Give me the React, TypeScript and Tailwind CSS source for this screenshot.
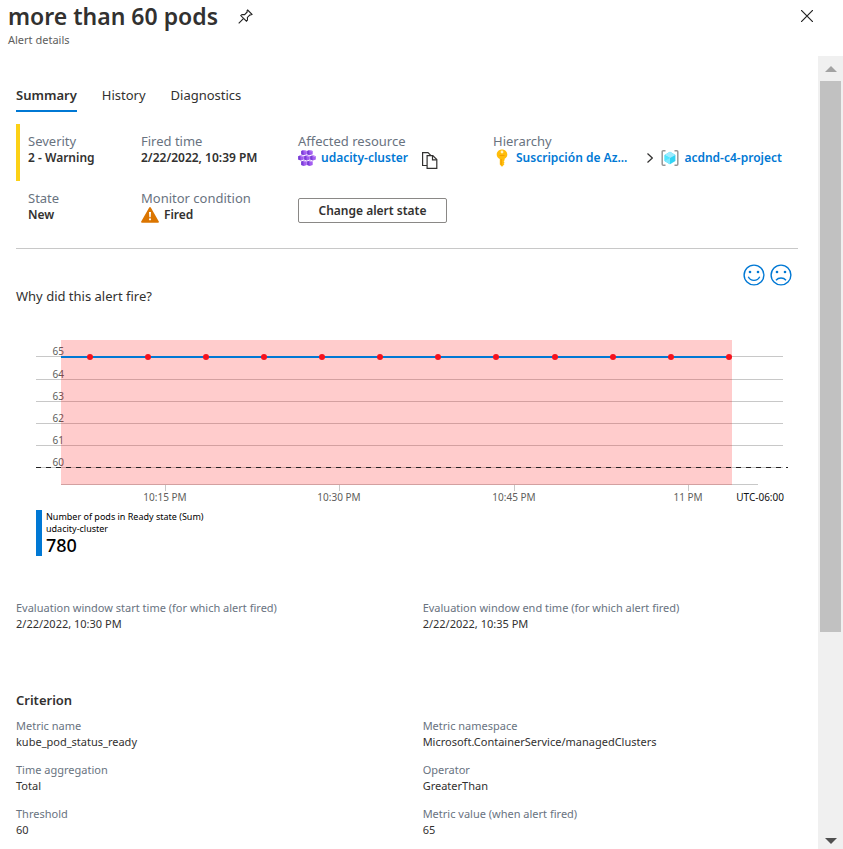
import type { ReactNode } from "react";

const tabs = ["Summary", "History", "Diagnostics"];

const gridLines = [
  { label: "65", y: 17 },
  { label: "64", y: 40 },
  { label: "63", y: 62 },
  { label: "62", y: 84 },
  { label: "61", y: 106 },
  { label: "60", y: 128 },
];

const timeTicks = [
  { label: "10:15 PM", x: 149 },
  { label: "10:30 PM", x: 323 },
  { label: "10:45 PM", x: 498 },
  { label: "11 PM", x: 672 },
];

const points = [74, 132, 190, 248, 306, 364, 422, 480, 539, 597, 655, 713];

const criteria = [
  ["Metric name", "kube_pod_status_ready"],
  ["Metric namespace", "Microsoft.ContainerService/managedClusters"],
  ["Time aggregation", "Total"],
  ["Operator", "GreaterThan"],
  ["Threshold", "60"],
  ["Metric value (when alert fired)", "65"],
];

function PinIcon() {
  return (
    <svg viewBox="0 0 15 15" className="size-[15px]" fill="none" stroke="#222" strokeWidth="1.1" aria-hidden="true">
      <path d="M9.6 1 14 5.4l-1.2.6-.8-.2-2.6 2.6.1 2.6-1.1 1.2-5.6-5.6L4 5.5l2.6.1L9.2 3 9 1.9z" />
      <path d="M5.4 9.6.7 14.3" />
    </svg>
  );
}

function CloseIcon() {
  return (
    <svg viewBox="0 0 12 12" className="size-3" stroke="#222" strokeWidth="1.2" aria-hidden="true">
      <path d="M0 0 12 12M12 0 0 12" />
    </svg>
  );
}

function WarningIcon() {
  return (
    <svg viewBox="0 0 18 16" className="h-4 w-[18px]" aria-hidden="true">
      <path d="M8.2.6a.9.9 0 0 1 1.6 0l8 13.800a.9.9 0 0 1-.8 1.400H1a.9.9 0 0 1-.8-1.400z" fill="#db7500" />
      <path d="M8 5h2l-.3 5.300H8.300z" fill="#fff" />
      <circle cx="9" cy="12.300" r="1.100" fill="#fff" />
    </svg>
  );
}

function ClusterIcon() {
  const cells = [
    [3.2, 0], [9.1, 0],
    [0.2, 5.3], [6.2, 5.3], [12.2, 5.3],
    [3.2, 10.6], [9.1, 10.6],
  ];
  return (
    <svg viewBox="0 0 18 16" className="h-4 w-[18px]" aria-hidden="true">
      {cells.map(([x, y]) => (
        <g key={`${x}-${y}`} transform={`translate(${x} ${y})`}>
          <path d="M2.800 0 5.600 1v3.300L2.800 5.300 0 4.300V1z" fill="#a35df0" />
          <path d="M0 1 2 .3l.5 4.900L0 4.300z" fill="#7a3fd6" />
          <path d="M2 .3 2.800 0 5.600 1 4 1.600z" fill="#c79bf8" />
        </g>
      ))}
    </svg>
  );
}

function CopyIcon() {
  return (
    <svg viewBox="0 0 16 17" className="h-[17px] w-4" fill="none" stroke="#323130" strokeWidth="1.2" aria-hidden="true">
      <path d="M5 13.500H.6V.6H6L9 3.600" />
      <path d="M5.100 3.600h5.700l4 4v8.800H5.100z" />
      <path d="M10.500 3.800v4.100h4.200" />
    </svg>
  );
}

function KeyIcon() {
  return (
    <svg viewBox="0 0 12 18" className="h-[18px] w-3" aria-hidden="true">
      <path
        d="M6 .4c3 0 5.300 2.200 5.300 5 0 2-1.100 3.500-2.700 4.300v1.500l-1 1 1 1-1 1 .9.900-1.900 2.200c-.3.300-.9.300-1.200 0L3.800 15.600V9.900C2 9.100.7 7.500.7 5.400.7 2.600 3 .4 6 .4z"
        fill="#ffbd0a"
      />
      <circle cx="6" cy="3" r="1.400" fill="#fff3c0" />
      <path d="M4.700 10v5.300l.9.900V10zM3.500 6.200h5v.8h-5z" fill="#ef9400" />
    </svg>
  );
}

function ResourceGroupIcon() {
  return (
    <svg viewBox="0 0 18 16" className="h-4 w-[18px]" aria-hidden="true">
      <path d="M4.500.8H2.200c-.6 0-1 .4-1 1v12.400c0 .6.4 1 1 1h2.300M13.500.8h2.300c.6 0 1 .4 1 1v12.400c0 .6-.4 1-1 1h-2.300" fill="none" stroke="#979797" strokeWidth="1.5" />
      <path d="M9 1.800l5.400 3.100v6.200L9 14.200l-5.400-3.100V4.900z" fill="#32d4f5" />
      <path d="M9 1.800l5.400 3.100L9 8 3.600 4.900z" fill="#9cebff" />
      <path d="M3.600 4.900 9 8v6.200l-5.400-3.100z" fill="#50e6ff" />
      <path d="M9 8 3.600 11.100 9 14.200z" fill="#9cebff" opacity=".6" />
    </svg>
  );
}

function FaceIcon({ happy }: { happy: boolean }) {
  return (
    <svg viewBox="0 0 22 22" className="size-[22px]" fill="none" stroke="#0078d4" strokeWidth="1.4" aria-hidden="true">
      <circle cx="11" cy="11" r="9.900" />
      <circle cx="7" cy="8" r="1.300" fill="#0078d4" stroke="none" />
      <circle cx="15" cy="8" r="1.300" fill="#0078d4" stroke="none" />
      {happy ? <path d="M5.300 12.700c1.200 2.500 3.300 3.700 5.700 3.700s4.500-1.200 5.700-3.700" /> : <path d="M6 16.200c1.300-1.500 3-2.200 5-2.200s3.700.7 5 2.200" />}
    </svg>
  );
}

function Field({ label, children }: { label: string; children: ReactNode }) {
  return (
    <div className="h-[57px]">
      <dt className="text-[13px] leading-[17px] text-[#69737f]">{label}</dt>
      <dd className="flex h-4 items-center text-[12px] leading-4 font-semibold whitespace-nowrap text-[#323130]">{children}</dd>
    </div>
  );
}

function Detail({ label, value }: { label: string; value: string }) {
  return (
    <div>
      <dt className="text-[11px] leading-4 text-[#69737f]">{label}</dt>
      <dd className="text-[11px] leading-4 text-[#323130]">{value}</dd>
    </div>
  );
}

function AlertChart() {
  return (
    <svg viewBox="0 0 782 170" className="block h-auto w-full" role="img" aria-label="Number of pods in Ready state">
      <g stroke="#c8c8c8">
        {gridLines.map((line) => (
          <path key={line.label} d={`M20 ${line.y - 0.5}H767`} />
        ))}
        <path d="M45 144.500H742" />
        {timeTicks.map((tick) => (
          <path key={tick.label} d={`M${tick.x + 0.5} 145v6`} />
        ))}
      </g>
      <g className="text-[10px]" fill="#605e5c">
        {gridLines.map((line) => (
          <text key={line.label} x="48" y={line.y - 2} textAnchor="end">{line.label}</text>
        ))}
        {timeTicks.map((tick) => (
          <text key={tick.label} x={tick.x} y="161" textAnchor="middle">{tick.label}</text>
        ))}
        <text x="768" y="161" textAnchor="end" fill="#111">UTC-06:00</text>
      </g>
      <rect x="45" y="0" width="671" height="145" fill="#ff0000" fillOpacity=".2" />
      <path d="M45 17H713" stroke="#0078d4" strokeWidth="2" />
      <path d="M20 127.500H772" stroke="#222" strokeDasharray="5 5" />
      {points.map((x) => (
        <circle key={x} cx={x} cy="17" r="3" fill="#f5121d" />
      ))}
    </svg>
  );
}

function ScrollRail() {
  return (
    <div className="flex w-[25px] shrink-0 flex-col items-center bg-[#f0f0f0]" aria-hidden="true">
      <div className="flex h-[25px] shrink-0 items-center">
        <svg viewBox="0 0 12 6" className="h-1.5 w-3"><path d="M0 6 6 0l6 6z" fill="#a3a3a3" /></svg>
      </div>
      <div className="h-[551px] w-[21px] bg-[#c1c1c1]" />
      <div className="mt-auto flex h-[17px] shrink-0 items-center">
        <svg viewBox="0 0 12 6" className="h-1.5 w-3"><path d="M0 0h12L6 6z" fill="#505050" /></svg>
      </div>
    </div>
  );
}

export default function App() {
  return (
    <div className="flex h-screen flex-col overflow-hidden bg-white font-['Noto_Sans','Open_Sans',sans-serif] text-[#323130]">
      <header className="flex h-14 shrink-0 items-start justify-between pr-[30px] pl-2">
        <div>
          <div className="flex h-8 items-center gap-5">
            <h1 className="text-[23px] leading-8 font-semibold">more than 60 pods</h1>
            <button type="button" aria-label="Pin"><PinIcon /></button>
          </div>
          <p className="text-[11px] leading-4 text-[#605e5c]">Alert details</p>
        </div>
        <button type="button" aria-label="Close" className="flex h-8 items-center"><CloseIcon /></button>
      </header>

      <div className="flex min-h-0 flex-1">
        <main className="min-w-0 flex-1 overflow-hidden pt-[25px] pr-5 pl-4">
          <div role="tablist" className="flex gap-[25px]">
            {tabs.map((tab, i) => (
              <button
                key={tab}
                type="button"
                role="tab"
                aria-selected={i === 0}
                className={i === 0 ? "h-[31px] border-b-2 border-[#0078d4] text-[13px] font-semibold" : "h-[31px] border-b-2 border-transparent text-[13px]"}
              >
                {tab}
              </button>
            ))}
          </div>

          <section className="mt-3 flex border-b border-[#c8c8c8] pb-px">
            <div className="h-[57px] w-1 bg-[#fcd116]" />
            <dl className="grid flex-1 grid-cols-[113px_157px_195px_1fr] pt-[9px] pl-2">
              <Field label="Severity">2 - Warning</Field>
              <Field label="Fired time">2/22/2022, 10:39 PM</Field>
              <Field label="Affected resource">
                <ClusterIcon />
                <a href="#cluster" className="ml-[5px] text-[#0078d4]">udacity-cluster</a>
                <button type="button" aria-label="Copy" className="ml-3.5 pt-1"><CopyIcon /></button>
              </Field>
              <Field label="Hierarchy">
                <span className="ml-[3px]"><KeyIcon /></span>
                <a href="#subscription" className="ml-2 text-[#0078d4]">Suscripción de Az...</a>
                <svg viewBox="0 0 6 10" className="mr-2 ml-5 h-2.5 w-1.5" fill="none" stroke="#323130" strokeWidth="1.2" aria-hidden="true"><path d="M.5.5 5.300 5 .5 9.500" /></svg>
                <ResourceGroupIcon />
                <a href="#project" className="ml-[5px] text-[#0078d4]">acdnd-c4-project</a>
              </Field>
              <Field label="State">New</Field>
              <Field label="Monitor condition"><WarningIcon /><span className="ml-[5px]">Fired</span></Field>
              <div className="pt-2">
                <button type="button" className="block h-[25px] w-[149px] rounded-[2px] border border-[#8a8886] text-[12px] leading-none font-semibold">
                  Change alert state
                </button>
              </div>
            </dl>
          </section>

          <div className="flex justify-between pt-[15px] pr-1.5">
            <h2 className="pt-[23px] text-[13px] leading-[18px]">Why did this alert fire?</h2>
            <div className="flex gap-[5px]">
              <button type="button" aria-label="Helpful" className="h-[22px]"><FaceIcon happy={true} /></button>
              <button type="button" aria-label="Not helpful" className="h-[22px]"><FaceIcon happy={false} /></button>
            </div>
          </div>

          <div className="pt-[35px]"><AlertChart /></div>

          <div className="ml-5 flex gap-1 text-black">
            <div className="w-1.5 bg-[#0078d4]" />
            <div>
              <p className="text-[9px] leading-[14px]">Number of pods in Ready state (Sum)</p>
              <p className="text-[9px] leading-[10px]">udacity-cluster</p>
              <p className="text-[18px] leading-[22px] font-medium">780</p>
            </div>
          </div>

          <dl className="grid grid-cols-[52fr_48fr] pt-11">
            <Detail label="Evaluation window start time (for which alert fired)" value="2/22/2022, 10:30 PM" />
            <Detail label="Evaluation window end time (for which alert fired)" value="2/22/2022, 10:35 PM" />
          </dl>

          <h2 className="pt-[59px] text-[13px] leading-[18px] font-semibold">Criterion</h2>
          <dl className="grid grid-cols-[52fr_48fr] gap-y-3 pt-[9px]">
            {criteria.map(([label, value]) => (
              <Detail key={label} label={label} value={value} />
            ))}
          </dl>
        </main>
        <ScrollRail />
      </div>
    </div>
  );
}
